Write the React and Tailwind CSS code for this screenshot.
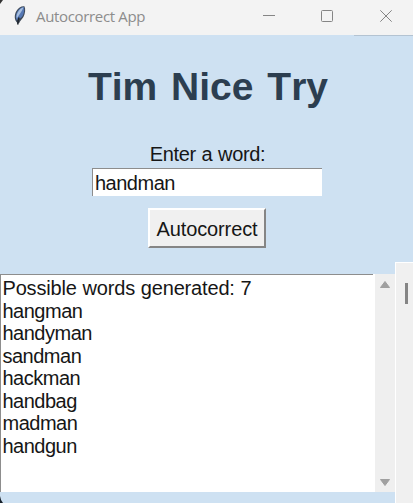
const WORDS = ['hangman', 'handyman', 'sandman', 'hackman', 'handbag', 'madman', 'handgun'];

function Feather() {
  return (
    <svg width="14" height="22" viewBox="0 0 14 22" className="block">
      <path d="M4.4 18C1.2 15 1 10.2 3.4 6 5.4 2.6 8.4.8 11.4 1.2c1.4 2.8.9 7.2-1 10.8-1.3 2.4-3.4 3.6-4.2 6z" fill="#3d4857" />
      <path d="M3.8 15.4C2 12.4 2.8 9 4.8 5.8 6.6 3.2 8.8 1.9 10.8 2c.8 2.6.4 6-1.2 9-1.3 2.4-3.8 2.6-5.8 4.4z" fill="#5578b4" />
      <path d="M3.8 13.4C3 11 4.2 7.6 6.2 5.2 7.8 3.2 9.2 2.4 10.4 2.4 9.2 6.2 6 9.8 3.8 13.4z" fill="#a8bfdf" />
      <path d="M4.8 19.6C4.8 17 5.2 15 6 12.4" fill="none" stroke="#20272f" strokeWidth="1.6" />
    </svg>
  );
}

function TitleBar() {
  return (
    <header className="flex h-[35px] shrink-0 items-center bg-[#f3f3f3] pl-[13px]">
      <div className="-mt-[4px] h-[22px] w-[23px]"><Feather /></div>
      <span className="-mt-[4px] flex-1 whitespace-nowrap font-['Open_Sans',sans-serif] text-[15px] leading-5 tracking-[-0.34px] text-[#8c8c8c]">Autocorrect App</span>
      <svg width="136" height="14" viewBox="0 0 136 14" fill="none" stroke="#858585" className="-mt-[3px] mr-[20px] block">
        <path d="M6 6.5h12" />
        <rect x="64.5" y="1.5" width="11" height="11" rx="1" />
        <path d="M123.3 1.3l11.4 11.4M134.7 1.3l-11.4 11.4" />
      </svg>
    </header>
  );
}

function ScrollBar() {
  return (
    <div className="flex w-5 flex-col items-center justify-between bg-[#efefef] pt-[6px] pb-[5px]">
      <svg width="12" height="9" viewBox="0 0 12 9" className="block"><path d="M6 1.5L10.5 7.5h-9z" fill="#a0a0a0" stroke="#a0a0a0" strokeLinejoin="round" /></svg>
      <svg width="12" height="9" viewBox="0 0 12 9" className="block"><path d="M6 7.5L10.5 1.5h-9z" fill="#a0a0a0" stroke="#a0a0a0" strokeLinejoin="round" /></svg>
    </div>
  );
}

export default function App() {
  return (
    <div className="relative flex h-[503px] w-[413px] flex-col overflow-hidden bg-[#cee1f2] font-['Liberation_Sans',Arial,sans-serif] text-[20px] tracking-[-0.5px] text-[#161616] [font-kerning:none]">
      <TitleBar />
      <div className="ml-[354px] h-px shrink-0 bg-[#b3c3d2]" />
      <main className="flex h-[226px] shrink-0 flex-col items-center">
        <h1 className="mt-[28px] ml-[3px] whitespace-nowrap text-[39px] leading-[46px] font-bold tracking-normal text-[#2c3e50] [word-spacing:3px]">Tim Nice Try</h1>
        <label htmlFor="word" className="mt-[33px] ml-[2px] leading-[23px] tracking-[-0.35px] [word-spacing:0.5px]">Enter a word:</label>
        <input id="word" defaultValue="handman" className="mt-[2px] ml-[1px] h-[28px] w-[230px] shrink-0 border-t border-l border-[#8d8d8d] bg-white px-[2px] pt-px tracking-[-0.5px] outline-none" />
        <button className="mt-[12px] h-[40px] w-[118px] shrink-0 border-2 border-t-white border-r-[#858585] border-b-[#858585] border-l-white bg-[#f0f0f0] pt-[2px] pl-px leading-[23px] tracking-[-0.12px]">Autocorrect</button>
      </main>
      <section className="flex min-h-0 flex-1">
        <div className="flex w-[395px] flex-col pt-[12px]">
          <div className="flex h-[218px]">
            <div className="w-[373px] border-t border-l border-[#8d8d8d] bg-white pt-[2px] pl-[1.5px] leading-[22.5px]">
              <p className="tracking-[-0.17px] [word-spacing:0.4px]">Possible words generated: 7</p>
              {WORDS.map((word) => <p key={word}>{word}</p>)}
            </div>
            <div className="w-[2px] bg-white" />
            <ScrollBar />
          </div>
        </div>
        <div className="w-[18px] border-t border-l border-white bg-[#f0f0f0] pt-[20px] pl-[9px]">
          <div className="h-[21px] w-[3px] bg-[#858585]" />
        </div>
      </section>
      <svg width="3" height="4" className="absolute top-0 left-0"><path d="M0 0h3L0 4z" fill="#333" /></svg>
      <svg width="3" height="7" className="absolute bottom-0 left-0"><path d="M0 0Q.5 4 3 7H0z" fill="#17202a" /></svg>
    </div>
  );
}
